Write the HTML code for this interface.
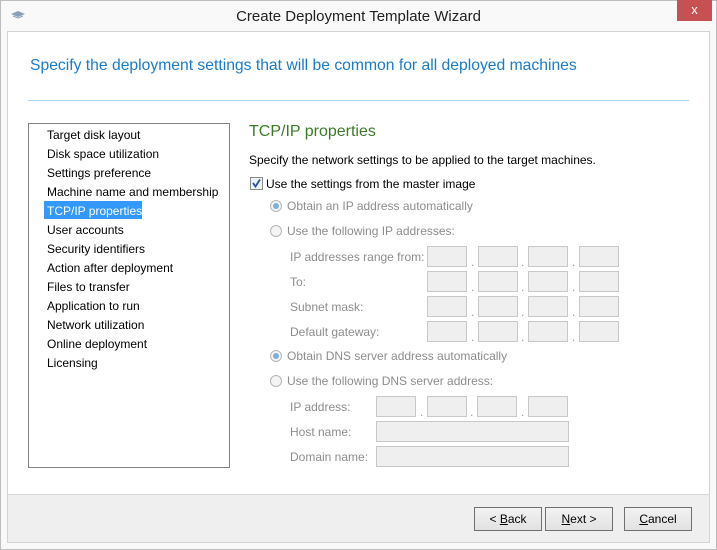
<!DOCTYPE html>
<html><head><style>
*{margin:0;padding:0;box-sizing:border-box}
body{width:717px;height:550px;position:relative;overflow:hidden;background:#f9f9f9;font-family:"Liberation Sans",sans-serif;font-size:12px;color:#000}
.a{position:absolute;white-space:nowrap}
.g{color:#8d8d8d}
.box{position:absolute;background:#efefef;border:1px solid #c8c8c8;height:21px}
.dot{position:absolute;color:#999}
.btn{position:absolute;top:507px;height:24px;width:68px;border:1px solid #707070;background:linear-gradient(#f2f2f2,#e2e2e2);text-align:center;line-height:22px;font-size:12px}
.radio{position:absolute;width:12px;height:12px;border-radius:50%;border:1px solid #b5b5b5;background:#f4f4f4}
.radio.on::after{content:"";position:absolute;left:2px;top:2px;width:6px;height:6px;border-radius:50%;background:#7bb0d8}
</style></head><body>
<div style="position:absolute;left:0;top:0;width:717px;height:550px;border:1px solid #bdbdbd"></div>
<svg class="a" style="left:10px;top:10px" width="16" height="10"><path d="M1 4 L8 1 L15 4 L8 7Z" fill="#8aa0b8"/><path d="M3 6 L8 8 L13 6" stroke="#8aa0b8" fill="none"/></svg>
<div class="a" style="left:0;width:717px;top:8px;text-align:center;font-size:15px;color:#222">Create Deployment Template Wizard</div>
<div class="a" style="left:677px;top:0;width:35px;height:21px;background:#c75050;color:#fff;text-align:center;font-size:13px;line-height:20px">x</div>
<div style="position:absolute;left:7px;top:31px;width:703px;height:512px;border:1px solid #d3d3d3;background:#fff"></div>
<div style="position:absolute;left:8px;top:494px;width:701px;height:48px;background:#efefef;border-top:1px solid #dadada"></div>
<div class="a" style="left:30px;top:57px;font-size:15.7px;color:#1a7cc9">Specify the deployment settings that will be common for all deployed machines</div>
<div style="position:absolute;left:28px;top:100px;width:661px;height:1px;background:#a9d3ee"></div>
<div style="position:absolute;left:28px;top:123px;width:202px;height:345px;border:1px solid #828282;background:#fff"></div>
<div style="position:absolute;left:44px;top:201px;width:98px;height:18px;background:#3399ff"></div>
<div class="a" style="left:47px;top:126px;line-height:19px">Target disk layout<br>Disk space utilization<br>Settings preference<br>Machine name and membership<br><span style="color:#fff">TCP/IP properties</span><br>User accounts<br>Security identifiers<br>Action after deployment<br>Files to transfer<br>Application to run<br>Network utilization<br>Online deployment<br>Licensing</div>
<div class="a" style="left:249px;top:123px;font-size:16px;color:#3c7a26">TCP/IP properties</div>
<div class="a" style="left:249px;top:153px">Specify the network settings to be applied to the target machines.</div>
<div class="a" style="left:250px;top:177px;width:13px;height:13px;border:1px solid #8a8a8a;background:#eef2f8"><svg width="11" height="11" style="position:absolute;left:0;top:0"><path d="M2 5 L4.5 8.5 L9 1.5" stroke="#2a4f9a" stroke-width="1.8" fill="none"/></svg></div>
<div class="a" style="left:266px;top:177px">Use the settings from the master image</div>
<div class="radio on" style="left:270px;top:200px"></div><div class="a g" style="left:287px;top:199px">Obtain an IP address automatically</div>
<div class="radio" style="left:270px;top:225px"></div><div class="a g" style="left:287px;top:224px">Use the following IP addresses:</div>
<div class="a g" style="left:290px;top:250px">IP addresses range from:</div>
<div class="a g" style="left:290px;top:275px">To:</div>
<div class="a g" style="left:290px;top:300px">Subnet mask:</div>
<div class="a g" style="left:290px;top:325px">Default gateway:</div>
<div class="box" style="left:427px;top:246px;width:40px"></div><div class="box" style="left:478px;top:246px;width:40px"></div><div class="box" style="left:528px;top:246px;width:40px"></div><div class="box" style="left:579px;top:246px;width:40px"></div>
<div class="box" style="left:427px;top:271px;width:40px"></div><div class="box" style="left:478px;top:271px;width:40px"></div><div class="box" style="left:528px;top:271px;width:40px"></div><div class="box" style="left:579px;top:271px;width:40px"></div>
<div class="box" style="left:427px;top:296px;width:40px"></div><div class="box" style="left:478px;top:296px;width:40px"></div><div class="box" style="left:528px;top:296px;width:40px"></div><div class="box" style="left:579px;top:296px;width:40px"></div>
<div class="box" style="left:427px;top:321px;width:40px"></div><div class="box" style="left:478px;top:321px;width:40px"></div><div class="box" style="left:528px;top:321px;width:40px"></div><div class="box" style="left:579px;top:321px;width:40px"></div>
<div class="dot" style="left:471px;top:255px">.</div><div class="dot" style="left:521px;top:255px">.</div><div class="dot" style="left:572px;top:255px">.</div>
<div class="dot" style="left:471px;top:280px">.</div><div class="dot" style="left:521px;top:280px">.</div><div class="dot" style="left:572px;top:280px">.</div>
<div class="dot" style="left:471px;top:305px">.</div><div class="dot" style="left:521px;top:305px">.</div><div class="dot" style="left:572px;top:305px">.</div>
<div class="dot" style="left:471px;top:330px">.</div><div class="dot" style="left:521px;top:330px">.</div><div class="dot" style="left:572px;top:330px">.</div>
<div class="radio on" style="left:270px;top:350px"></div><div class="a g" style="left:287px;top:349px">Obtain DNS server address automatically</div>
<div class="radio" style="left:270px;top:375px"></div><div class="a g" style="left:287px;top:374px">Use the following DNS server address:</div>
<div class="a g" style="left:290px;top:400px">IP address:</div>
<div class="a g" style="left:290px;top:425px">Host name:</div>
<div class="a g" style="left:290px;top:450px">Domain name:</div>
<div class="box" style="left:376px;top:396px;width:40px"></div><div class="box" style="left:427px;top:396px;width:40px"></div><div class="box" style="left:477px;top:396px;width:40px"></div><div class="box" style="left:528px;top:396px;width:40px"></div>
<div class="dot" style="left:420px;top:405px">.</div><div class="dot" style="left:470px;top:405px">.</div><div class="dot" style="left:521px;top:405px">.</div>
<div class="box" style="left:376px;top:421px;width:193px"></div>
<div class="box" style="left:376px;top:446px;width:193px"></div>
<div class="btn" style="left:474px">&lt; <u>B</u>ack</div>
<div class="btn" style="left:545px"><u>N</u>ext &gt;</div>
<div class="btn" style="left:624px"><u>C</u>ancel</div>
</body></html>
